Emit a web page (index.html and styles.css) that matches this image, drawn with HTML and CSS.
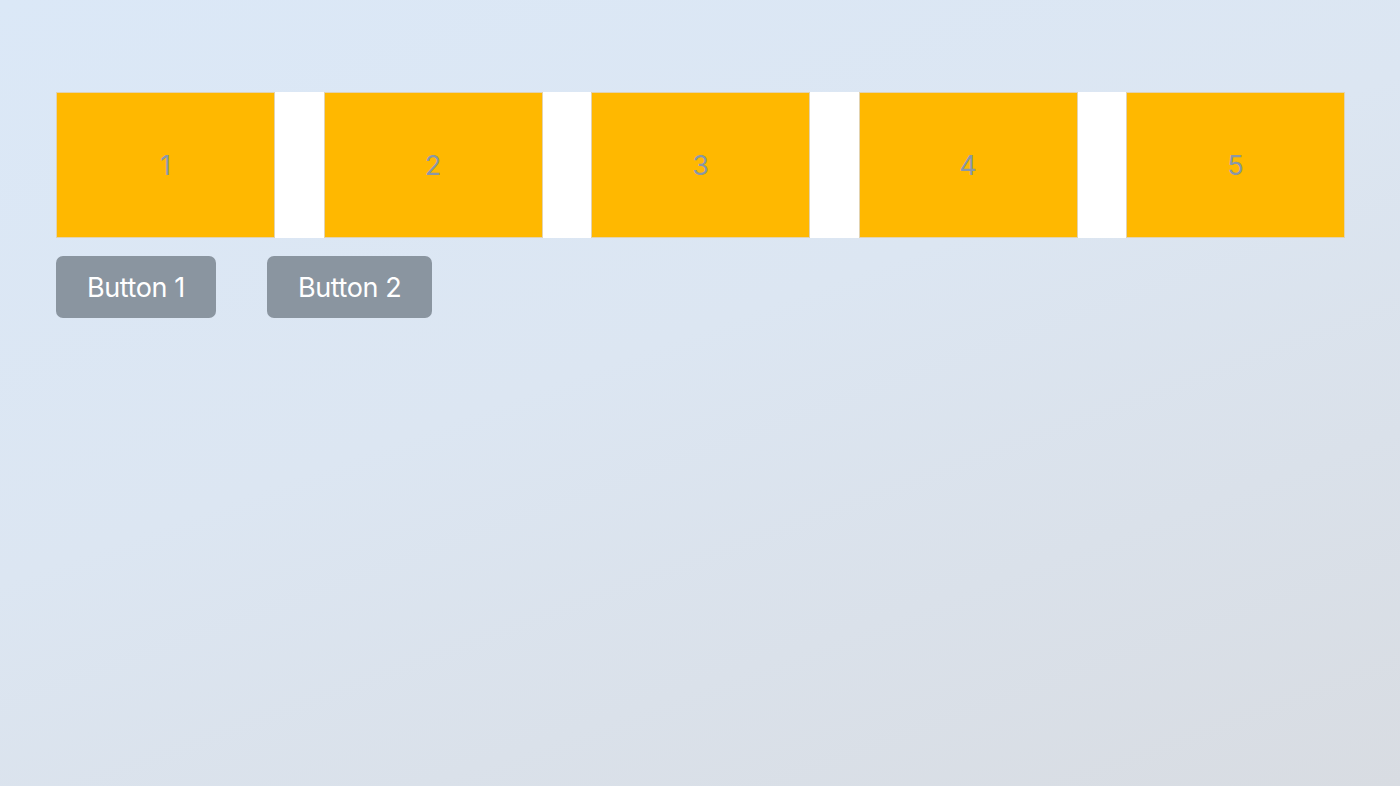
FILE: index.html
```html
<!DOCTYPE html>
<html>
<head>
<meta charset="utf-8">
<link rel="stylesheet" href="styles.css">
</head>
<body>
<main class="page">
  <div class="strip">
    <div class="box">1</div>
    <div class="box">2</div>
    <div class="box">3</div>
    <div class="box">4</div>
    <div class="box">5</div>
  </div>
  <div class="buttons">
    <button class="btn">Button 1</button>
    <button class="btn">Button 2</button>
  </div>
</main>
</body>
</html>
```

FILE: styles.css
```css
html, body {
  margin: 0;
  height: 100%;
}
body {
  background: linear-gradient(160deg, #dbe8f7 0%, #dce6f2 45%, #d8dce2 100%);
  font-family: Inter, "Noto Sans", sans-serif;
}
.page {
  padding: 92px 55px 0 56px;
}
.strip {
  display: flex;
  justify-content: space-between;
  background: #ffffff;
  height: 146px;
}
.box {
  width: 219px;
  box-sizing: border-box;
  background: #ffb800;
  border: 1px solid #e2d3b0;
  display: flex;
  align-items: center;
  justify-content: center;
  color: #8a97a8;
  font-size: 27px;
}
.buttons {
  display: flex;
  gap: 51px;
  margin-top: 18px;
}
.btn {
  height: 62px;
  padding: 0 31px;
  border: none;
  border-radius: 7px;
  background: #8a95a0;
  color: #ffffff;
  font-family: Inter, "Noto Sans", sans-serif;
  font-size: 27px;
  letter-spacing: -0.4px;
}
```
